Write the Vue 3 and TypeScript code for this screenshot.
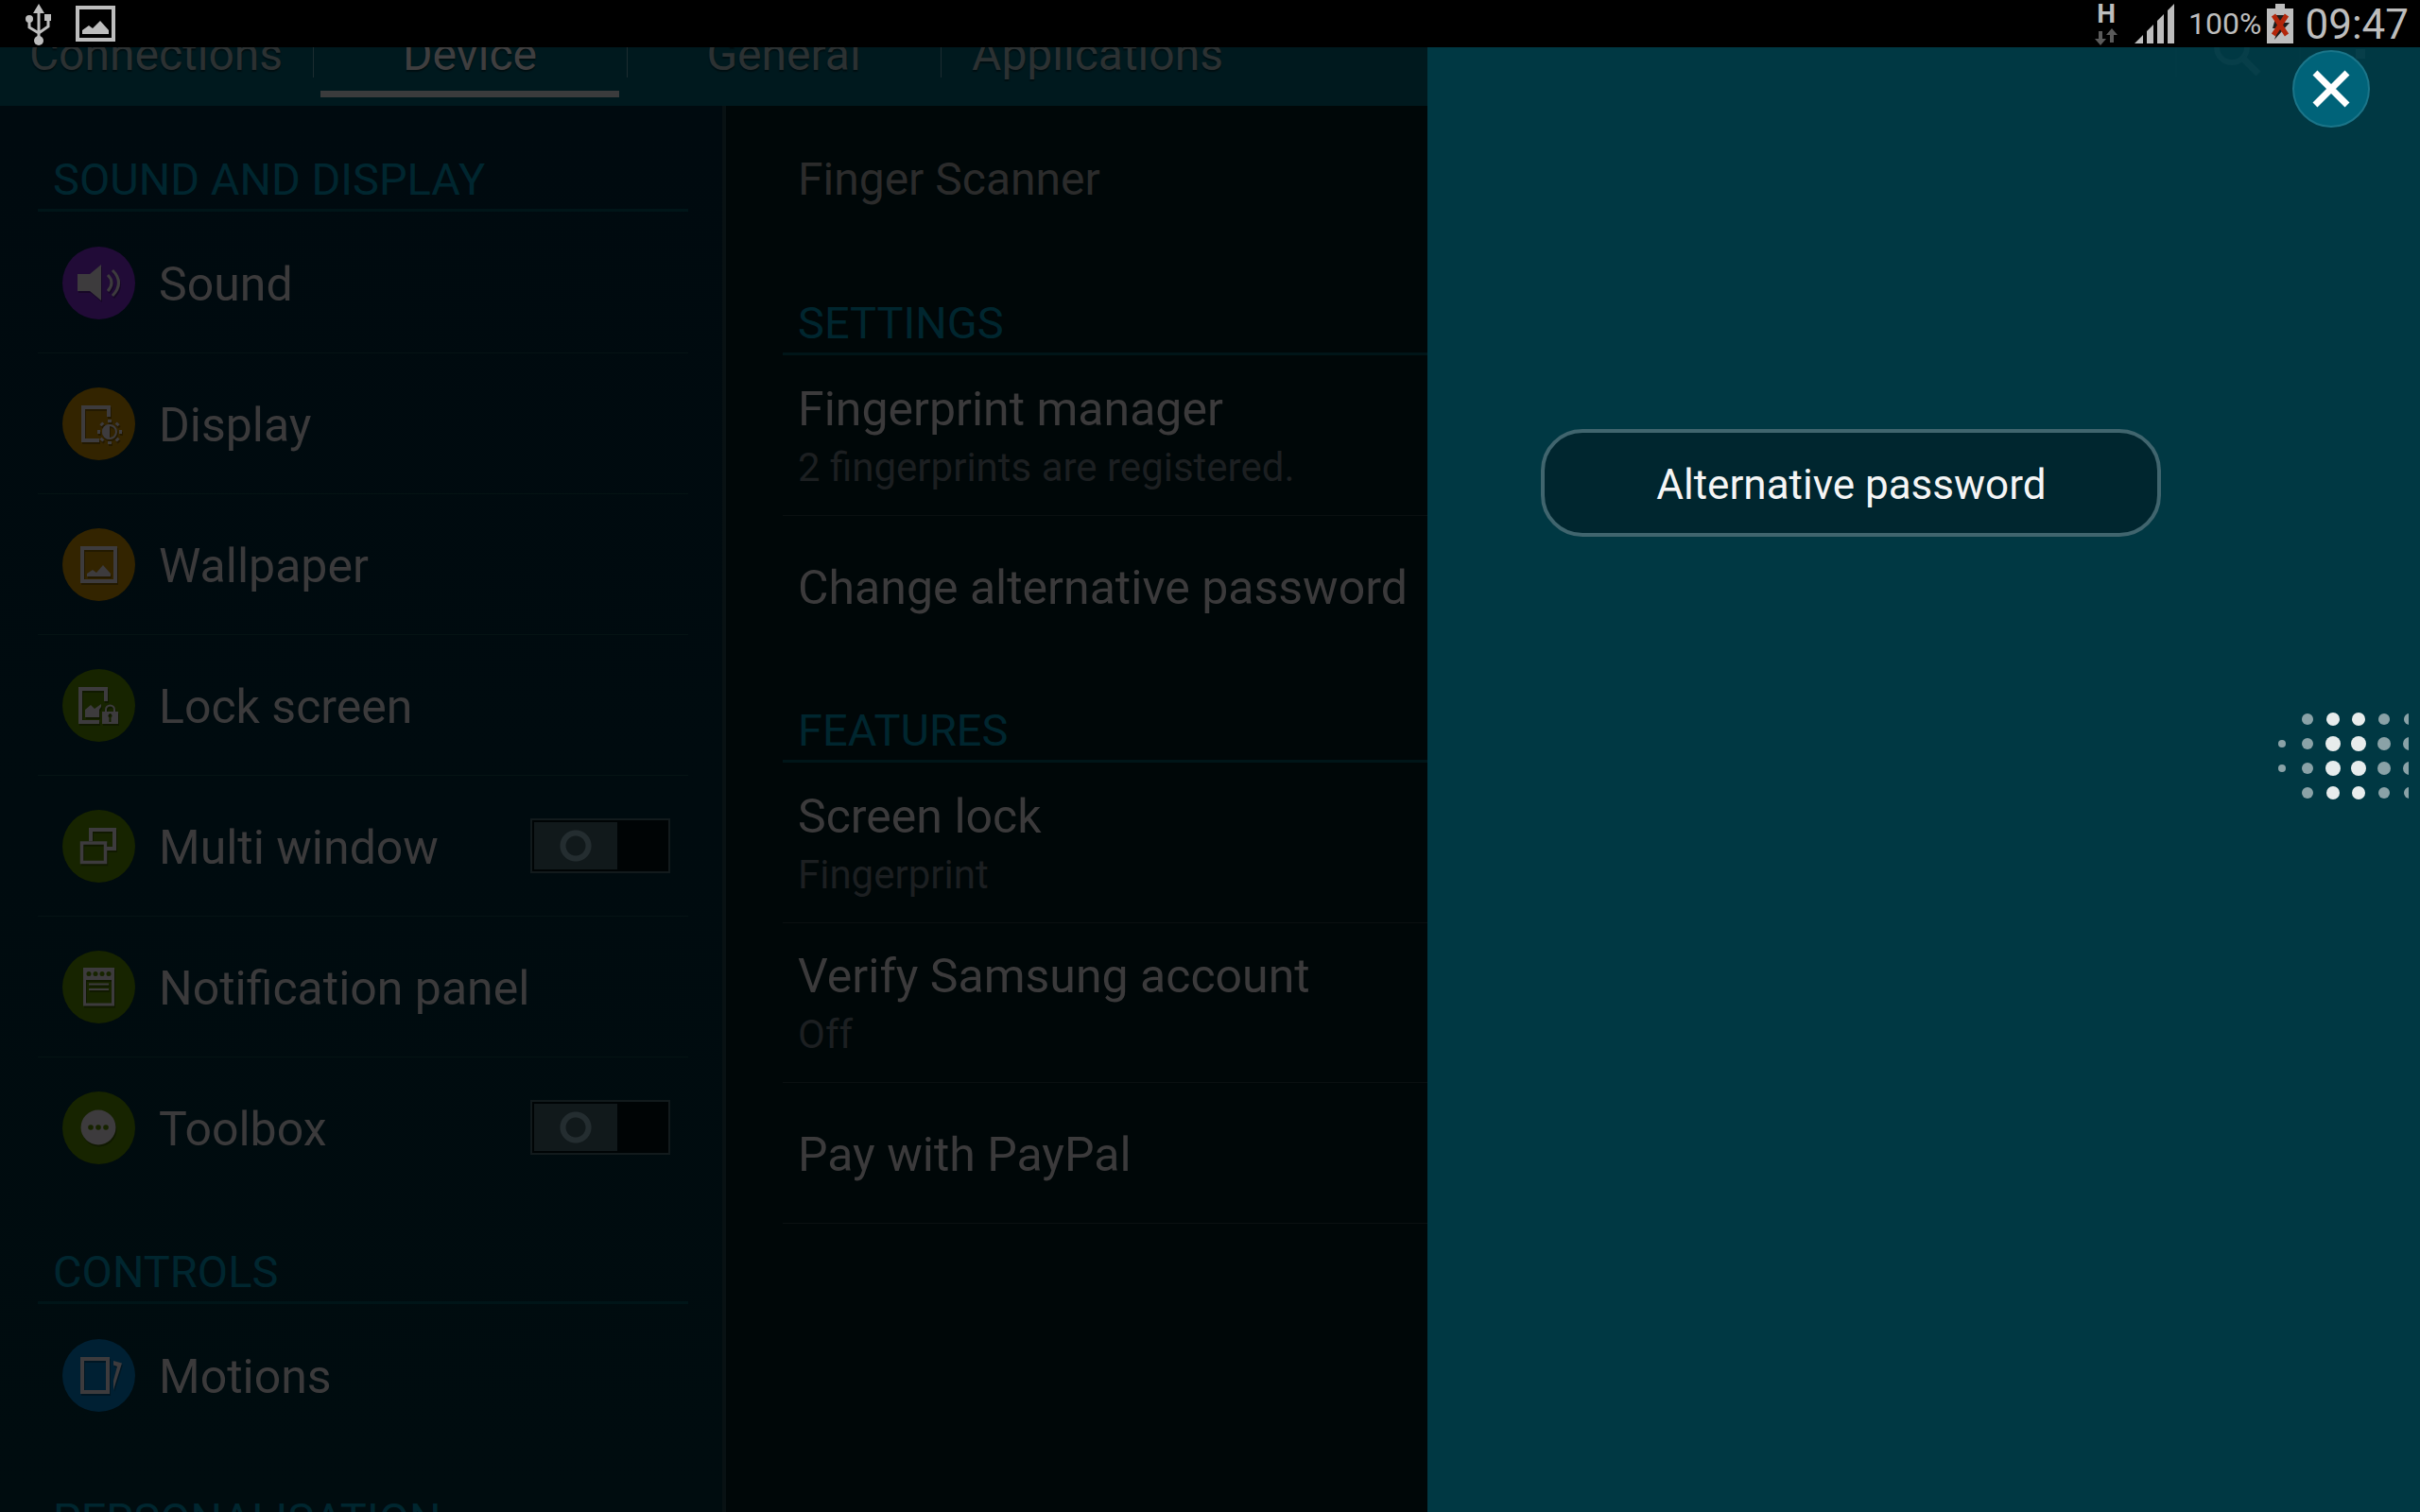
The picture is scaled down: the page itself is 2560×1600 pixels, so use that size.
<script setup lang="ts">
import { ref } from 'vue'

interface MenuItem {
  id: string
  label: string
  tone: 'purple' | 'orange' | 'green' | 'blue'
  toggle?: boolean
}
interface MenuGroup {
  title: string
  items: MenuItem[]
}
interface Option {
  title: string
  note?: string
}
interface OptionGroup {
  title: string
  options: Option[]
}
interface Dot {
  x: number
  y: number
  r: number
  bright: boolean
}

const tabs = ['Connections', 'Device', 'General', 'Applications']
const activeTab = ref('Device')

const menu: MenuGroup[] = [
  {
    title: 'SOUND AND DISPLAY',
    items: [
      { id: 'sound', label: 'Sound', tone: 'purple' },
      { id: 'display', label: 'Display', tone: 'orange' },
      { id: 'wallpaper', label: 'Wallpaper', tone: 'orange' },
      { id: 'lock', label: 'Lock screen', tone: 'green' },
      { id: 'multi', label: 'Multi window', tone: 'green', toggle: true },
      { id: 'notification', label: 'Notification panel', tone: 'green' },
      { id: 'toolbox', label: 'Toolbox', tone: 'green', toggle: true },
    ],
  },
  { title: 'CONTROLS', items: [{ id: 'motions', label: 'Motions', tone: 'blue' }] },
  { title: 'PERSONALISATION', items: [] },
]

const details: OptionGroup[] = [
  {
    title: 'SETTINGS',
    options: [
      { title: 'Fingerprint manager', note: '2 fingerprints are registered.' },
      { title: 'Change alternative password' },
    ],
  },
  {
    title: 'FEATURES',
    options: [
      { title: 'Screen lock', note: 'Fingerprint' },
      { title: 'Verify Samsung account', note: 'Off' },
      { title: 'Pay with PayPal' },
    ],
  },
]

const rowsY = [11, 37, 63, 89]
const columns = [
  { x: 7, outer: 0, inner: 4, bright: false },
  { x: 34, outer: 6, inner: 6, bright: false },
  { x: 61, outer: 7, inner: 8, bright: true },
  { x: 88, outer: 7, inner: 8, bright: true },
  { x: 115, outer: 6, inner: 7, bright: false },
  { x: 142, outer: 6, inner: 7, bright: false },
]
const dots: Dot[] = columns.flatMap((c) =>
  rowsY.map((y, i) => ({ x: c.x, y, r: i === 0 || i === 3 ? c.outer : c.inner, bright: c.bright })),
)
const rays = [0, 45, 90, 135, 180, 225, 270, 315]
</script>

<template>
  <div class="screen">
    <header class="status">
      <div class="status-side">
        <svg class="usb" width="28" height="46" viewBox="0 0 28 46">
          <g fill="none" stroke="#bdbdbd" stroke-width="3">
            <path d="M14 10V40M4 18V27L14 33M24 18V26L14 33" />
          </g>
          <g fill="#bdbdbd">
            <path d="M14 2L20 12H8Z" />
            <circle cx="4" cy="18" r="4" />
            <rect x="20" y="13" width="7" height="7" />
            <circle cx="14" cy="41" r="5" />
          </g>
        </svg>
        <svg width="42" height="38" viewBox="0 0 42 38">
          <rect x="2" y="2" width="38" height="34" fill="none" stroke="#bdbdbd" stroke-width="4" />
          <path d="M7 30V26L14 21L18 24L26 16L35 26V30Z" fill="#bdbdbd" />
        </svg>
      </div>
      <div class="status-side">
        <div class="network">
          <span class="network-kind">H</span>
          <svg width="24" height="20" viewBox="0 0 24 20" fill="#5a5a5a">
            <path d="M4 4H8V12H12L6 19L0 12H4Z" />
            <path d="M16 16H20V8H24L18 1L12 8H16Z" />
          </svg>
        </div>
        <svg class="signal" width="42" height="42" viewBox="0 0 42 42" fill="#bdbdbd">
          <path d="M0 42L9 33V42ZM13 42V29L20 22V42ZM24 42V18L31 11V42ZM35 42V7L42 0V42Z" />
        </svg>
        <span class="percent">100%</span>
        <svg class="battery" width="28" height="42" viewBox="0 0 28 42">
          <path d="M9 0H19V5H28V42H0V5H9Z" fill="#bdbdbd" />
          <path d="M10 12H20L17 20H24L8 38L12 26H6Z" fill="#1c1c1c" />
          <path d="M7 12L21 33M21 12L7 33" stroke="#b3260a" stroke-width="5" />
        </svg>
        <time class="clock">09:47</time>
      </div>
    </header>

    <div class="body">
      <div class="settings">
        <nav class="tabs">
          <button
            v-for="tab in tabs"
            :key="tab"
            type="button"
            class="tab"
            :class="{ active: tab === activeTab }"
            @click="activeTab = tab"
          >
            <span>{{ tab }}</span>
            <i class="tab-line"></i>
          </button>
        </nav>

        <div class="columns">
          <aside class="menu">
            <section v-for="group in menu" :key="group.title">
              <h2 class="heading">{{ group.title }}</h2>
              <ul class="list">
                <li v-for="item in group.items" :key="item.id" class="item">
                  <svg class="badge" :class="item.tone" viewBox="0 0 77 77" width="77" height="77">
                    <circle class="disc" cx="38.5" cy="38.5" r="38.5" />
                    <g v-if="item.id === 'sound'" class="glyph">
                      <path class="solid" d="M16 29H29L41 19V57L29 47H16Z" />
                      <path stroke-width="3" d="M48 30Q56 38 48 47M53 25Q66 38 53 52" />
                    </g>
                    <g v-else-if="item.id === 'display'" class="glyph">
                      <path stroke-width="4" d="M49 31V21H22V56H39" />
                      <circle cx="50" cy="47" r="7" stroke-width="2" />
                      <path class="solid" d="M50 39A8 8 0 0 0 50 55Z" />
                      <rect
                        v-for="a in rays"
                        :key="a"
                        class="solid"
                        x="48"
                        y="34"
                        width="4"
                        height="3"
                        :transform="`rotate(${a} 50 47)`"
                      />
                    </g>
                    <g v-else-if="item.id === 'wallpaper'" class="glyph">
                      <rect x="21" y="21" width="35" height="35" stroke-width="4" />
                      <path class="solid" d="M26 51V48L32 44L36 47L43 39L51 48V51Z" />
                    </g>
                    <g v-else-if="item.id === 'lock'" class="glyph">
                      <path stroke-width="4" d="M46 34V21H19V56H39" />
                      <path class="solid" d="M24 51V43L30 38L34 42L41 37V40L39 43V51Z" />
                      <path stroke-width="2" d="M46 46V43A4.500 4.500 0 0 1 55 43V46" />
                      <path
                        class="solid"
                        fill-rule="evenodd"
                        d="M42 45H59V58H42ZM50.500 47A2.500 2.500 0 0 0 49.500 51.500V56H51.500V51.500A2.500 2.500 0 0 0 50.500 47Z"
                      />
                    </g>
                    <g v-else-if="item.id === 'multi'" class="glyph">
                      <path stroke-width="4" d="M30 33V21H55V41H47" />
                      <rect x="20.500" y="35" width="25" height="20.500" stroke-width="3.500" />
                    </g>
                    <g v-else-if="item.id === 'notification'" class="glyph">
                      <rect x="23.500" y="20" width="30" height="37" stroke-width="3" />
                      <rect class="solid" x="22" y="18" width="33" height="13" />
                      <path stroke-width="2" d="M28 35.500H49M28 41H49" />
                      <circle v-for="x in [28, 35, 42, 49]" :key="x" class="hole" :cx="x" cy="24.500" r="2.500" />
                    </g>
                    <g v-else-if="item.id === 'toolbox'" class="glyph">
                      <circle class="solid" cx="38" cy="38" r="18.500" />
                      <circle v-for="x in [30, 38, 46]" :key="x" class="hole" :cx="x" cy="38" r="2.800" />
                    </g>
                    <g v-else class="glyph">
                      <rect x="21" y="21" width="27" height="35" stroke-width="4" />
                      <path class="solid" d="M54 23L63 25.500L54 54V44L58 29L54 27.500Z" />
                    </g>
                  </svg>
                  <template v-if="item.toggle">
                    <label class="label" :for="item.id">{{ item.label }}</label>
                    <input :id="item.id" class="switch" type="checkbox" role="switch" />
                  </template>
                  <a v-else class="label" href="#">{{ item.label }}</a>
                </li>
              </ul>
            </section>
          </aside>

          <main class="detail">
            <h1 class="title">Finger Scanner</h1>
            <section v-for="group in details" :key="group.title">
              <h2 class="heading">{{ group.title }}</h2>
              <ul class="list">
                <li v-for="option in group.options" :key="option.title" class="option" :class="{ tall: option.note }">
                  <a class="option-title" href="#">{{ option.title }}</a>
                  <span v-if="option.note" class="note">{{ option.note }}</span>
                </li>
              </ul>
            </section>
          </main>
        </div>
      </div>

      <section class="verify">
        <svg class="ghost" width="259" height="62" viewBox="0 0 259 62">
          <g stroke="#073e49" fill="none">
            <circle cx="60" cy="0" r="16" stroke-width="6" />
            <path d="M71 11L88 28" stroke-width="7" />
          </g>
          <path d="M1 0V32M132 0V32" stroke="#033b46" />
          <rect x="191" y="2" width="10" height="10" fill="#073e49" />
        </svg>
        <button type="button" class="close" aria-label="Close">
          <svg width="40" height="40" viewBox="0 0 40 40">
            <path d="M3 3L37 37M37 3L3 37" stroke="#fff" stroke-width="7" />
          </svg>
        </button>
        <button type="button" class="alternative">Alternative password</button>
        <svg class="sensor" width="141" height="100" viewBox="0 0 141 100">
          <circle
            v-for="(dot, i) in dots"
            :key="i"
            :cx="dot.x"
            :cy="dot.y"
            :r="dot.r"
            :fill="dot.bright ? '#e7ecec' : '#8aa2a7'"
          />
        </svg>
      </section>
    </div>
  </div>
</template>

<style>
body {
  margin: 0;
  background: #000708;
}
</style>

<style scoped>
.screen {
  height: 100vh;
  overflow: hidden;
  display: flex;
  flex-direction: column;
  font-family: Roboto, "Liberation Sans", sans-serif;
  color: #3b3a3b;
}
h1,
h2,
ul {
  margin: 0;
  padding: 0;
  font-weight: 400;
  list-style: none;
}
button {
  padding: 0;
  border: 0;
  background: none;
  font: inherit;
  color: inherit;
}
a {
  color: inherit;
  text-decoration: none;
}
svg {
  display: block;
  flex: none;
}

.status {
  position: relative;
  z-index: 2;
  flex: none;
  height: 50px;
  box-sizing: border-box;
  padding: 0 12px 0 27px;
  display: flex;
  justify-content: space-between;
  background: #000;
  color: #bdbdbd;
}
.status-side {
  display: flex;
  align-items: center;
}
.usb {
  margin-right: 25px;
}
.network {
  display: flex;
  flex-direction: column;
  align-items: center;
  margin-right: 18px;
}
.network-kind {
  font-size: 28px;
  font-weight: 700;
  line-height: 28px;
}
.signal {
  margin-right: 15px;
}
.percent {
  margin-right: 6px;
  font-size: 32px;
  line-height: 50px;
}
.battery {
  margin-right: 12px;
}
.clock {
  padding-top: 2px;
  font-size: 44px;
  line-height: 48px;
}

.body {
  flex: 1;
  min-height: 0;
  display: flex;
}
.settings {
  flex: 0 0 59%;
  min-width: 0;
  display: flex;
  flex-direction: column;
}
.tabs {
  flex: none;
  height: 112px;
  margin-top: -50px;
  display: flex;
  background: #00191e;
}
.tab {
  width: 332px;
  padding: 0 9px 9px 7px;
  display: flex;
  flex-direction: column;
  justify-content: flex-end;
  gap: 10px;
  background: linear-gradient(#1c2c30, #1c2c30) right top / 1px 82px no-repeat;
  font-size: 48px;
  line-height: 56px;
  color: #2c3132;
  text-align: center;
  text-shadow: 0 2px 1px #000f12;
}
.tab span {
  align-self: center;
}
.tab:last-child {
  background: none;
}
.tab-line {
  height: 7px;
}
.tab.active {
  color: #3f3e3f;
}
.active .tab-line {
  background: #3a3b3c;
}

.columns {
  flex: 1;
  min-height: 0;
  display: flex;
}
.menu {
  flex: 0 0 768px;
  box-sizing: border-box;
  padding: 0 36px 0 40px;
  overflow: hidden;
  border-right: 4px solid #081113;
  background: linear-gradient(#000a0f, #000c0f);
}
.heading {
  height: 112px;
  box-sizing: border-box;
  margin-bottom: 1px;
  padding: 0 16px 3px;
  display: flex;
  align-items: flex-end;
  border-bottom: 3px solid #001518;
  font-size: 47px;
  line-height: 56px;
  color: #00262f;
}
.item {
  height: 149px;
  box-sizing: border-box;
  padding: 0 19px 0 26px;
  display: flex;
  align-items: center;
  border-bottom: 1px solid #051314;
}
.item:last-child {
  border-color: transparent;
}
.label {
  flex: 1;
  padding: 4px 0 0 25px;
  font-size: 50px;
  line-height: 64px;
}
.disc,
.hole {
  fill: var(--tone);
}
.purple {
  --tone: #210b37;
}
.orange {
  --tone: #332400;
}
.green {
  --tone: #172400;
}
.blue {
  --tone: #002033;
}
.glyph {
  fill: none;
  stroke: #3d3b3d;
  filter: drop-shadow(1px 2px 0 rgba(0, 0, 0, 0.3));
}
.solid {
  fill: #3d3b3d;
  stroke: none;
}
.hole {
  stroke: none;
}
.switch {
  appearance: none;
  width: 148px;
  height: 58px;
  margin: 0;
  padding: 2px;
  box-sizing: border-box;
  border: 2px solid #121a1c;
  background: #000405;
}
.switch::before {
  content: "";
  display: block;
  width: 88px;
  height: 50px;
  background: radial-gradient(circle, transparent 10px, #242d30 11px, #242d30 16px, transparent 17px) #11191b;
}

.detail {
  flex: 1;
  min-width: 0;
  padding-left: 60px;
  overflow: hidden;
  white-space: nowrap;
  background: #000708;
}
.title {
  height: 152px;
  box-sizing: border-box;
  padding: 50px 16px 0;
  font-size: 48px;
  line-height: 56px;
  color: #2b2b2b;
}
.option {
  height: 149px;
  box-sizing: border-box;
  padding: 4px 16px 0;
  display: flex;
  flex-direction: column;
  justify-content: center;
  border-bottom: 1px solid #0a1011;
}
.tall {
  height: 169px;
}
.option-title {
  font-size: 50px;
  line-height: 64px;
}
.note {
  font-size: 42px;
  line-height: 60px;
  color: #1c1f21;
}
section:not(:last-child) > .list > .option:last-child {
  border-color: transparent;
}

.verify {
  position: relative;
  flex: 1;
  display: flex;
  flex-direction: column;
  background: #003843;
}
.ghost {
  position: absolute;
  top: 0;
  right: 0;
}
.close {
  position: relative;
  align-self: flex-end;
  width: 82px;
  height: 82px;
  margin: 3px 53px 0 0;
  box-sizing: border-box;
  display: grid;
  place-items: center;
  border: 2px solid #1b7589;
  border-radius: 50%;
  background: #006379;
}
.alternative {
  width: 656px;
  height: 114px;
  margin: 319px 0 0 120px;
  padding-top: 3px;
  border: 4px solid #40656e;
  border-radius: 44px;
  background: #00262f;
  font-size: 44px;
  line-height: 56px;
  color: #f5f5f5;
}
.sensor {
  align-self: flex-end;
  margin: 182px 12px 0 0;
}
</style>
